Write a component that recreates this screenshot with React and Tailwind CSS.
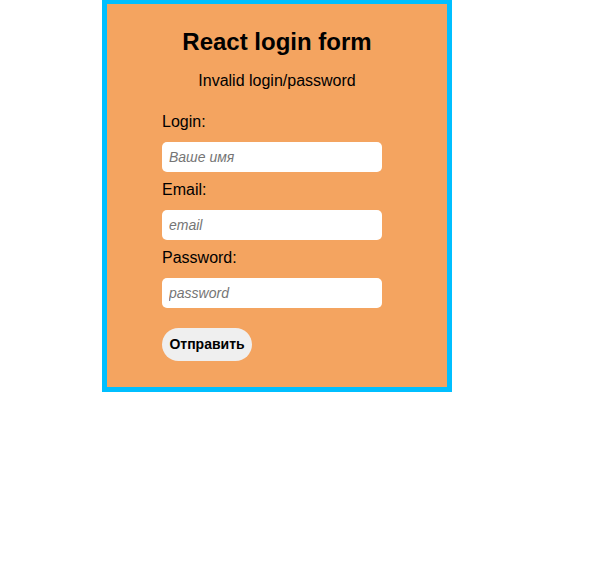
export default function App() {
  return (
    <div className="w-[601px] h-[567px] bg-white" style={{ fontFamily: '"Liberation Sans", Arial, sans-serif' }}>
      <div className="ml-[102px] w-[350px] h-[392px] bg-[#f4a460] border-[5px] border-t-[4px] border-[#00bfff] pt-[24px] text-black">
        <h1 className="text-[24px] leading-[28px] font-bold text-center">React login form</h1>
        <p className="mt-[16px] text-[16px] leading-[18px] text-center">Invalid login/password</p>
        <form className="ml-[55px] mt-[23px] w-[220px] flex flex-col" onSubmit={(e) => e.preventDefault()}>
          <label className="block text-[16px] leading-[18px]">Login:</label>
          <input
            type="text"
            placeholder="Ваше имя"
            className="mt-[11px] h-[30px] w-[220px] rounded-[5px] bg-white px-[7px] text-[14px] outline-none placeholder:italic placeholder:text-[#757575]"
          />
          <label className="block mt-[9px] text-[16px] leading-[18px]">Email:</label>
          <input
            type="email"
            placeholder="email"
            className="mt-[11px] h-[30px] w-[220px] rounded-[5px] bg-white px-[7px] text-[14px] outline-none placeholder:italic placeholder:text-[#757575]"
          />
          <label className="block mt-[9px] text-[16px] leading-[18px]">Password:</label>
          <input
            type="password"
            placeholder="password"
            className="mt-[11px] h-[30px] w-[220px] rounded-[5px] bg-white px-[7px] text-[14px] outline-none placeholder:italic placeholder:text-[#757575]"
          />
          <button
            type="submit"
            className="mt-[20px] h-[33px] w-[90px] rounded-full bg-[#efefef] text-[14px] font-bold text-black"
          >
            Отправить
          </button>
        </form>
      </div>
    </div>
  );
}
